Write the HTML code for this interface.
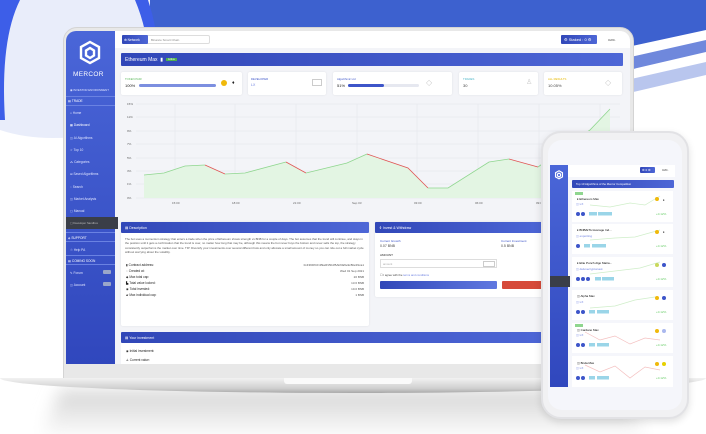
<!DOCTYPE html>
<html><head><meta charset="utf-8"><style>
*{margin:0;padding:0;box-sizing:border-box}
body{width:706px;height:434px;overflow:hidden;background:#fff;font-family:"Liberation Sans",sans-serif;position:relative}
.a{position:absolute}
.t{font-size:3.5px;color:#444;white-space:nowrap}
.card{background:#fff;border-radius:2px;box-shadow:0 0 2px rgba(0,0,0,.08)}
.bar{background:linear-gradient(90deg,#3147b8,#4d66d6);color:#fff;font-size:4px;padding-left:4px;display:flex;align-items:center;border-radius:1px}
.si{font-size:3.2px;color:#dfe4ff;left:70px}
</style></head><body>
<svg class="a" style="left:0;top:0" width="706" height="434">
<defs>
<linearGradient id="sh" x1="0" y1="0" x2="0" y2="1"><stop offset="0" stop-color="#d4d4d4"/><stop offset="1" stop-color="#fff"/></linearGradient>
<filter id="bl"><feGaussianBlur stdDeviation="8"/></filter>
</defs>
<polygon points="0,0 706,0 706,30 150,150 150,0" fill="#3d61cf"/>
<polygon points="350,120 706,40 706,52 350,135" fill="#6f88dc"/>
<polygon points="450,120 706,62 706,75 450,135" fill="#b9c6ee"/>
<path d="M0,0 H150 V120 Q60,150 0,130 Z" fill="#e9edfa"/>
<path d="M135,0 Q160,60 140,120 L150,120 Q168,60 148,0 Z" fill="#3d5ee8"/>
<path d="M20,0 Q0,40 5,120 L0,120 L0,0 Z" fill="#3d5ee8"/>
<path d="M60,390 L620,390 L650,440 L40,440 Z" fill="url(#sh)" filter="url(#bl)"/>
</svg>
<!-- laptop frame -->
<div class="a" style="left:63px;top:27px;width:571px;height:352px;background:#e8e8e8;border-radius:14px 14px 0 0;border:1px solid #d4d4d4"></div>
<div class="a" style="left:66px;top:31px;width:564px;height:333px;background:#f3f4f8;border-radius:10px 10px 0 0;overflow:hidden">
</div>
<!-- base -->
<div class="a" style="left:0;top:378px;width:706px;height:15px;background:linear-gradient(#f2f2f2,#cfcfcf 70%,#a8a8a8);border-radius:0 0 50% 50%/0 0 100% 100%"></div>
<div class="a" style="left:284px;top:378px;width:128px;height:6px;background:#fafafa;border-radius:0 0 3px 3px"></div>
<!-- sidebar -->
<div class="a" style="left:66px;top:31px;width:49px;height:333px;background:linear-gradient(#4a66d8,#3047bd);border-radius:10px 0 0 0"></div>
<svg class="a" style="left:78px;top:40px" width="24" height="26" viewBox="0 0 24 26"><g fill="none" stroke="#fff" stroke-width="2.4"><path d="M12,2 L21,7 V18 L12,23 L3,18 V7 Z"/><path d="M12,8 L16,10.5 V15.5 L12,18 L8,15.5 V10.5 Z"/></g></svg>
<div class="a" style="left:73px;top:71px;font-size:6.5px;color:#fff;letter-spacing:.3px">MERCOR</div>
<div class="a si" style="top:88px;font-size:2.8px">◉ INVESTOR ENVIRONMENT</div>
<div class="a" style="left:66px;top:96px;width:49px;height:10px;border-top:1px solid #6a82e2;border-bottom:1px solid #6a82e2"></div>
<div class="a si" style="top:99px;left:68px;color:#fff">▤ TRADE</div>
<div class="a si" style="top:111px">⌂ Home</div>
<div class="a si" style="top:123px;color:#fff">▦ Dashboard</div>
<div class="a si" style="top:136px">◫ AI Algorithms</div>
<div class="a si" style="top:148px">☆ Top 10</div>
<div class="a si" style="top:160px">⁂ Categories</div>
<div class="a si" style="top:172px">⊞ Saved Algorithms</div>
<div class="a si" style="top:185px">◌ Search</div>
<div class="a si" style="top:197px">◫ Market Analysis</div>
<div class="a si" style="top:209px">▢ Manual</div>
<div class="a" style="left:66px;top:217px;width:52px;height:12px;background:#3a3e48"></div>
<div class="a si" style="top:221px;color:#bbb;font-size:2.8px">▢ Developer Sandbox</div>
<div class="a" style="left:66px;top:232px;width:49px;height:10px;border-top:1px solid #6a82e2;border-bottom:1px solid #6a82e2"></div>
<div class="a si" style="top:236px;left:68px;color:#fff">◈ SUPPORT</div>
<div class="a si" style="top:248px">☉ Help PA</div>
<div class="a" style="left:66px;top:255px;width:49px;height:10px;border-top:1px solid #6a82e2;border-bottom:1px solid #6a82e2"></div>
<div class="a si" style="top:259px;left:68px;color:#fff">▤ COMING SOON</div>
<div class="a si" style="top:271px">✎ Forum</div><div class="a" style="left:103px;top:270px;width:8px;height:4px;background:#9aa6c9;border-radius:1px"></div>
<div class="a si" style="top:283px">◫ Account</div><div class="a" style="left:103px;top:282px;width:8px;height:4px;background:#9aa6c9;border-radius:1px"></div>
<!-- top bar -->
<div class="a" style="left:115px;top:31px;width:515px;height:17px;background:#fff;border-radius:0 10px 0 0"></div>
<div class="a" style="left:122px;top:35px;width:88px;height:9px;border:1px solid #ddd;border-radius:2px;background:#fff"></div>
<div class="a bar" style="left:122px;top:35px;width:26px;height:9px;font-size:3.3px;padding-left:2px">⊕ Network</div>
<div class="a t" style="left:151px;top:38px;font-size:3px;color:#888">Binance Smart Chain</div>
<div class="a bar" style="left:561px;top:35px;width:36px;height:9px;font-size:4px;padding-left:3px">⚙ Staked : 0 ⚙</div>
<div class="a t" style="left:608px;top:38px;font-size:3px">0x80..</div>
<!-- title -->
<div class="a bar" style="left:121px;top:53px;width:502px;height:13px;font-size:5px">Ethereum Max &nbsp;▮ <span style="background:#4caf50;font-size:2.5px;padding:0 2px;margin-left:3px">Active</span></div>
<!-- stat cards -->
<div class="a card" style="left:121px;top:72px;width:121px;height:23px"></div>
<div class="a t" style="left:125px;top:77px;color:#5cb85c;font-size:2.8px">TOKEN PAIR</div>
<div class="a t" style="left:125px;top:83px;font-size:4px;color:#222">100%</div>
<div class="a" style="left:139px;top:84px;width:77px;height:2.5px;background:#7c8fe0;border-radius:2px"></div>
<div class="a" style="left:221px;top:80px;width:6px;height:6px;border-radius:50%;background:#f0b90b"></div>
<div class="a t" style="left:232px;top:80px;font-size:5px;color:#222">♦</div>
<div class="a card" style="left:248px;top:72px;width:78px;height:23px"></div>
<div class="a t" style="left:251px;top:77px;color:#3d55c9;font-size:2.8px">DEVELOPER</div>
<div class="a t" style="left:251px;top:83px;color:#6a7ee0">LX</div>
<div class="a" style="left:312px;top:79px;width:10px;height:7px;border:1px solid #ccc"></div>
<div class="a card" style="left:333px;top:72px;width:119px;height:23px"></div>
<div class="a t" style="left:337px;top:77px;color:#3d55c9;font-size:2.8px">Algorithmic Ltd</div>
<div class="a t" style="left:337px;top:83px;font-size:4px;color:#222">51%</div>
<div class="a" style="left:348px;top:84px;width:71px;height:2.5px;background:#e6e8f0;border-radius:2px"></div>
<div class="a" style="left:348px;top:84px;width:36px;height:2.5px;background:#3d55c9;border-radius:2px"></div>
<div class="a t" style="left:426px;top:78px;font-size:8px;color:#ccc">◇</div>
<div class="a card" style="left:459px;top:72px;width:79px;height:23px"></div>
<div class="a t" style="left:463px;top:77px;color:#4db6c8;font-size:2.8px">TRADES</div>
<div class="a t" style="left:463px;top:83px;font-size:4px">30</div>
<div class="a t" style="left:526px;top:78px;font-size:7px;color:#ccc">♙</div>
<div class="a card" style="left:544px;top:72px;width:78px;height:23px"></div>
<div class="a t" style="left:548px;top:77px;color:#e6b800;font-size:2.8px">ALL RESULTS</div>
<div class="a t" style="left:548px;top:83px;font-size:4px">10.05%</div>
<div class="a t" style="left:605px;top:78px;font-size:8px;color:#ccc">◇</div>
<!-- chart -->
<svg class="a" style="left:0;top:0" width="706" height="434">
<g stroke="#e2e4ea" stroke-width=".5">
<line x1="136" y1="104" x2="620" y2="104"/><line x1="136" y1="117" x2="620" y2="117"/><line x1="136" y1="131" x2="620" y2="131"/><line x1="136" y1="144" x2="620" y2="144"/><line x1="136" y1="158" x2="620" y2="158"/><line x1="136" y1="171" x2="620" y2="171"/><line x1="136" y1="184" x2="620" y2="184"/><line x1="136" y1="198" x2="620" y2="198"/>
<line x1="175" y1="104" x2="175" y2="198"/><line x1="235" y1="104" x2="235" y2="198"/><line x1="296" y1="104" x2="296" y2="198"/><line x1="357" y1="104" x2="357" y2="198"/><line x1="417" y1="104" x2="417" y2="198"/><line x1="478" y1="104" x2="478" y2="198"/><line x1="539" y1="104" x2="539" y2="198"/><line x1="600" y1="104" x2="600" y2="198"/>
</g>
<polygon points="144,175 164,173 185,166 205,165 225,174 245,173 286,162 306,173 347,163 367,154 408,168 428,188 448,188 489,162 509,159 538,167 590,130 610,109 610,198 144,198" fill="#e3f5e3"/>
<polyline points="144,175 164,173 185,166 205,165" fill="none" stroke="#8fd68f" stroke-width=".8"/>
<polyline points="205,165 225,174" fill="none" stroke="#e05555" stroke-width=".8"/>
<polyline points="225,174 245,173 286,162" fill="none" stroke="#8fd68f" stroke-width=".8"/>
<polyline points="286,162 306,173" fill="none" stroke="#e05555" stroke-width=".8"/>
<polyline points="306,173 347,163 367,154" fill="none" stroke="#8fd68f" stroke-width=".8"/>
<polyline points="367,154 408,168 428,188" fill="none" stroke="#e05555" stroke-width=".8"/>
<polyline points="428,188 448,188 489,162 509,159" fill="none" stroke="#8fd68f" stroke-width=".8"/>
<polyline points="509,159 538,167" fill="none" stroke="#e05555" stroke-width=".8"/>
<polyline points="538,167 590,130 610,109" fill="none" stroke="#8fd68f" stroke-width=".8"/>
<g font-size="3" fill="#666" font-family="Liberation Sans">
<text x="127" y="105">15%</text><text x="127" y="118">11%</text><text x="127" y="132">9%</text><text x="127" y="145">7%</text><text x="127" y="159">5%</text><text x="127" y="172">3%</text><text x="127" y="185">1%</text><text x="127" y="199">0%</text>
<text x="172" y="204">15:00</text><text x="232" y="204">18:00</text><text x="293" y="204">21:00</text><text x="352" y="204">Sep 03</text><text x="414" y="204">03:00</text><text x="475" y="204">06:00</text><text x="536" y="204">09:00</text>
</g>
</svg>
<!-- description -->
<div class="a card" style="left:121px;top:222px;width:248px;height:104px"></div>
<div class="a bar" style="left:121px;top:222px;width:248px;height:11px;font-size:3.5px">▤ Description</div>
<div class="a" style="left:125px;top:237px;width:240px;font-size:2.9px;line-height:4.4px;color:#555">The bot uses a momentum strategy that enters a trade when the price of Ethereum shows strength vs BNB for a couple of days. The bot assumes that the trend will continue, and stays in the position until it gets a confirmation that the trend is over, no matter how long that may be, although this means the bot never buys the bottom and never sells the top, the strategy consistently outperforms the market over time. TIP: Diversify your investments over several different bots and only allocate a small amount of money so you can ride out a full market cycle without worrying about the volatility.</div>
<div class="a t" style="left:126px;top:262px;font-size:3.2px;line-height:6px;color:#222">▮ Contract address:<br>◌ Created at:<br>◆ Max total cap:<br>▙ Total value locked:<br>◉ Total invested:<br>▰ Max individual cap:</div>
<div class="a t" style="left:280px;top:262px;width:84px;text-align:right;font-size:3px;line-height:6px;color:#555">0xF36DfCF4f9a0f15b4f5Ab6fa5e9c8fa4f1ca1<br>Wed 01 Sep 2021<br>20 BNB<br>13.6 BNB<br>10.0 BNB<br>1 BNB</div>
<!-- invest -->
<div class="a card" style="left:375px;top:222px;width:170px;height:75px"></div>
<div class="a bar" style="left:375px;top:222px;width:170px;height:11px;font-size:3.5px">⚱ Invest &amp; Withdraw</div>
<div class="a t" style="left:380px;top:239px;color:#3d55c9;font-size:3px">Current Growth</div>
<div class="a t" style="left:380px;top:244px;font-size:3.5px">0.07 BNB</div>
<div class="a t" style="left:501px;top:239px;color:#3d55c9;font-size:3px">Current Investment</div>
<div class="a t" style="left:501px;top:244px;font-size:3.5px">0.5 BNB</div>
<div class="a t" style="left:380px;top:253px;font-size:3px;color:#222">AMOUNT</div>
<div class="a" style="left:380px;top:259px;width:117px;height:9px;border:1px solid #ddd;background:#fff"></div>
<div class="a t" style="left:383px;top:262px;font-size:2.8px;color:#aaa">amount</div>
<div class="a" style="left:483px;top:261px;width:12px;height:6px;border:1px solid #ccc"></div>
<div class="a t" style="left:380px;top:273px;font-size:2.8px">☐ I agree with the <span style="color:#6a7ee0">terms and conditions</span></div>
<div class="a" style="left:380px;top:281px;width:117px;height:8px;background:linear-gradient(90deg,#3147b8,#6078e0);border-radius:1px"></div>
<div class="a" style="left:502px;top:281px;width:45px;height:8px;background:#d64a3a;border-radius:1px"></div>
<!-- your investment -->
<div class="a" style="left:121px;top:332px;width:425px;height:32px;background:#fff"></div>
<div class="a bar" style="left:121px;top:332px;width:425px;height:11px;font-size:3.5px">▤ Your investment</div>
<div class="a t" style="left:126px;top:347px;font-size:3.2px;line-height:9px;color:#222">◉ Initial investment:<br>♙ Current value:</div>
<!-- phone -->
<div class="a" style="left:541px;top:131px;width:148px;height:288px;background:#f1f1f3;border:2px solid #e2e2e5;border-radius:20px;box-shadow:0 3px 8px rgba(0,0,0,.12)"></div>
<div class="a" style="left:548px;top:140px;width:134px;height:270px;background:#f5f6fb;border-radius:14px"></div>
<div class="a" style="left:550px;top:165px;width:18px;height:222px;background:linear-gradient(#4a66d8,#3047bd)"></div>
<svg class="a" style="left:554px;top:170px" width="10" height="10" viewBox="0 0 24 26"><path d="M12,2 L21,7 V18 L12,23 L3,18 V7 Z M12,8 L16,10.5 V15.5 L12,18 L8,15.5 V10.5 Z" fill="none" stroke="#fff" stroke-width="3"/></svg>
<div class="a" style="left:550px;top:276px;width:20px;height:11px;background:#3a3e48"></div>
<div class="a" style="left:568px;top:165px;width:107px;height:12px;background:#fff"></div>
<div class="a bar" style="left:640px;top:167px;width:15px;height:6px;font-size:3px;padding-left:2px">⚙ 0 ⚙</div>
<div class="a t" style="left:662px;top:169px;font-size:2.5px">0x80..</div>
<div class="a bar" style="left:572px;top:180px;width:102px;height:8px;font-size:2.8px">Top 10 Algorithms of the Mercor Competition</div>
<svg class="a" style="left:0;top:0" width="706" height="434">
<g font-family="Liberation Sans" font-size="3">
<g><rect x="572" y="191" width="101" height="31" fill="#fff"/><rect x="575" y="192" width="8" height="3" fill="#8fd68f"/><text x="577" y="200">♦ Ethereum Max</text><text x="576" y="205" fill="#6a7ee0">◫ LX</text><circle cx="578" cy="214" r="2" fill="#3d55c9"/><circle cx="583" cy="214" r="2" fill="#3d55c9"/><rect x="589" y="212" width="8" height="3.5" fill="#9ad5e8"/><rect x="598" y="212" width="14" height="3.5" fill="#9ad5e8"/><polyline points="590,205 610,207 630,203 645,205 660,196" fill="none" stroke="#cfeec9" stroke-width=".7"/><circle cx="657" cy="199" r="2" fill="#f0b90b"/><text x="663" y="201">♦</text><text x="656" y="215" fill="#6c6">+0.12%</text></g>
<g><rect x="572" y="224" width="101" height="30" fill="#fff"/><text x="577" y="231">♦ BNB/ETH Average Ind...</text><text x="576" y="237" fill="#6a7ee0">◫ exporting</text><circle cx="578" cy="246" r="2" fill="#3d55c9"/><rect x="584" y="244" width="6" height="3.5" fill="#9ad5e8"/><rect x="592" y="244" width="14" height="3.5" fill="#9ad5e8"/><polyline points="590,240 615,238 635,237 660,230" fill="none" stroke="#cfeec9" stroke-width=".7"/><circle cx="657" cy="232" r="2" fill="#f0b90b"/><text x="663" y="233">♦</text><text x="656" y="247" fill="#6c6">+0.12%</text></g>
<g><rect x="572" y="257" width="101" height="30" fill="#fff"/><text x="577" y="264">♦ Elite Punch Algo Matra...</text><text x="576" y="270" fill="#6a7ee0">◫ deluxecryptonaut</text><circle cx="578" cy="279" r="2" fill="#3d55c9"/><circle cx="583" cy="279" r="2" fill="#3d55c9"/><circle cx="588" cy="279" r="2" fill="#3d55c9"/><rect x="595" y="277" width="6" height="3.5" fill="#9ad5e8"/><rect x="602" y="277" width="12" height="3.5" fill="#9ad5e8"/><polyline points="590,274 615,271 640,268 660,262" fill="none" stroke="#cfeec9" stroke-width=".7"/><circle cx="657" cy="265" r="2" fill="#c9d85c"/><circle cx="664" cy="265" r="2" fill="#3d55c9"/><text x="656" y="280" fill="#6c6">+0.12%</text></g>
<g><rect x="572" y="290" width="101" height="30" fill="#fff"/><text x="577" y="297">◫ Alpha Max</text><text x="576" y="303" fill="#6a7ee0">◫ LX</text><circle cx="578" cy="312" r="2" fill="#3d55c9"/><circle cx="583" cy="312" r="2" fill="#3d55c9"/><rect x="589" y="310" width="6" height="3.5" fill="#9ad5e8"/><rect x="597" y="310" width="12" height="3.5" fill="#9ad5e8"/><polyline points="590,308 615,306 635,300 655,297" fill="none" stroke="#cfeec9" stroke-width=".7"/><circle cx="657" cy="298" r="2" fill="#f0b90b"/><circle cx="664" cy="298" r="2" fill="#3d55c9"/><text x="656" y="313" fill="#6c6">+0.12%</text></g>
<g><rect x="572" y="323" width="101" height="30" fill="#fff"/><rect x="575" y="324" width="8" height="3" fill="#8fd68f"/><text x="577" y="331">◫ Cardano Max</text><text x="576" y="336" fill="#6a7ee0">◫ LX</text><circle cx="578" cy="345" r="2" fill="#3d55c9"/><circle cx="583" cy="345" r="2" fill="#3d55c9"/><rect x="589" y="343" width="6" height="3.5" fill="#9ad5e8"/><rect x="597" y="343" width="12" height="3.5" fill="#9ad5e8"/><polyline points="585,332 600,340 615,336 630,344 645,338 660,340" fill="none" stroke="#f4c0c0" stroke-width=".7"/><circle cx="657" cy="331" r="2" fill="#f0b90b"/><circle cx="664" cy="331" r="2" fill="#aab8ee"/><text x="656" y="346" fill="#6c6">+0.12%</text></g>
<g><rect x="572" y="356" width="101" height="31" fill="#fff"/><text x="577" y="364">◫ Bnda Max</text><text x="576" y="369" fill="#6a7ee0">◫ LX</text><circle cx="578" cy="378" r="2" fill="#3d55c9"/><circle cx="583" cy="378" r="2" fill="#3d55c9"/><rect x="589" y="376" width="6" height="3.5" fill="#9ad5e8"/><rect x="597" y="376" width="12" height="3.5" fill="#9ad5e8"/><polyline points="585,365 600,372 615,366 630,378 645,367 660,370" fill="none" stroke="#f4c0c0" stroke-width=".7"/><circle cx="657" cy="364" r="2" fill="#f0b90b"/><circle cx="664" cy="364" r="2" fill="#e6d000"/><text x="656" y="379" fill="#6c6">+0.12%</text></g>
</g>
</svg>
</body></html>
